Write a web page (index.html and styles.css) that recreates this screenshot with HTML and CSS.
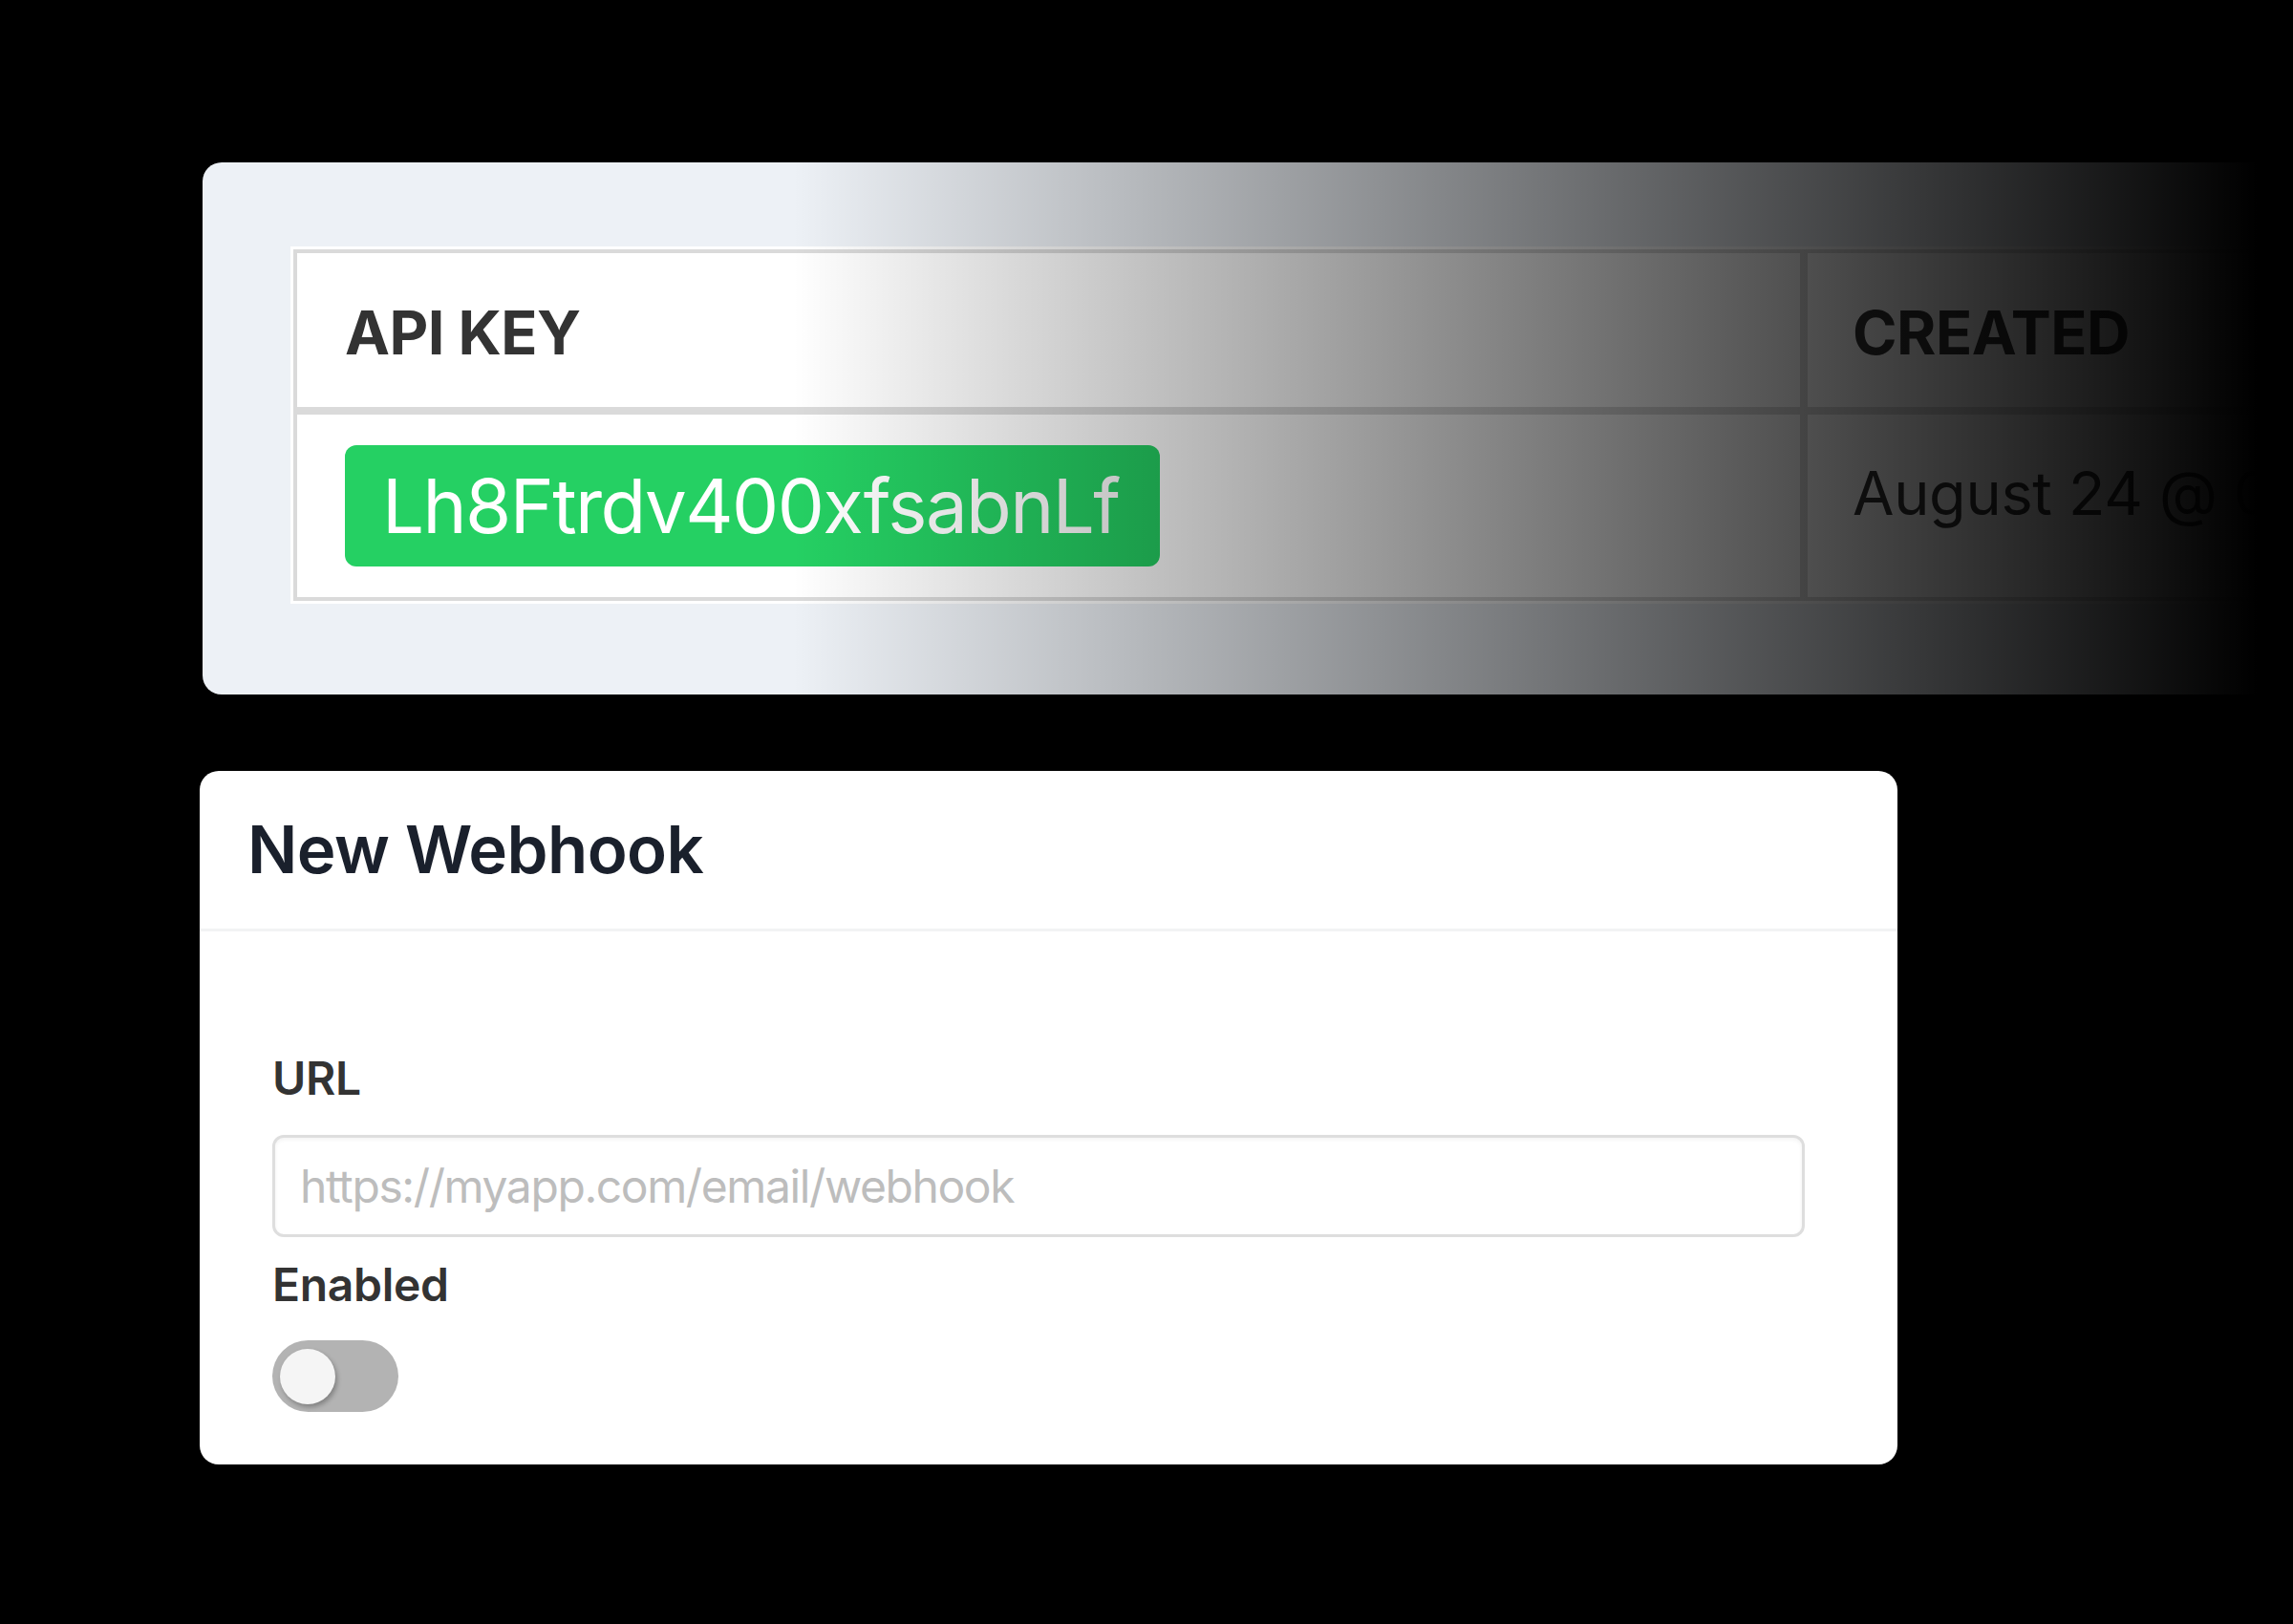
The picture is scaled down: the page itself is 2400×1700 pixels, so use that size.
FILE: index.html
```html
<!DOCTYPE html>
<html lang="en">
<head>
<meta charset="utf-8">
<title>API Keys &amp; Webhooks</title>
<link rel="stylesheet" href="styles.css">
</head>
<body>
<main class="page">
  <section class="key-card">
    <div class="table-wrap">
      <table class="key-table">
        <thead>
          <tr>
            <th class="col-key">API KEY</th>
            <th class="col-created">CREATED</th>
          </tr>
        </thead>
        <tbody>
          <tr>
            <td class="col-key"><span class="key-badge">Lh8Ftrdv400xfsabnLf</span></td>
            <td class="col-created date-cell">August 24 @ 04:31</td>
          </tr>
        </tbody>
      </table>
    </div>
  </section>

  <section class="webhook-card">
    <header class="webhook-head">
      <h2 class="webhook-title">New Webhook</h2>
    </header>
    <div class="webhook-body">
      <label class="field-label" for="url">URL</label>
      <input class="field-input" id="url" type="text" placeholder="https://myapp.com/email/webhook">
      <div class="field-label enabled-label">Enabled</div>
      <div class="switch"><span class="knob"></span></div>
    </div>
  </section>
</main>
</body>
</html>
```

FILE: styles.css
```css
html, body {
  margin: 0;
  padding: 0;
  background: #000;
  overflow: hidden;
  width: 2400px;
  height: 1700px;
}

body {
  font-family: Inter, "Noto Sans", "Liberation Sans", sans-serif;
}

.page {
  padding: 170px 0 0 209px;
  display: flex;
  flex-direction: column;
  align-items: flex-start;
}

/* ---------- API key card ---------- */
.key-card {
  position: relative;
  margin-left: 3px;
  width: 2400px;
  box-sizing: border-box;
  background: #edf1f6;
  border-radius: 20px 0 0 20px;
  padding: 88px 0 91px 92px;
  overflow: hidden;
}

.key-card::after {
  content: "";
  position: absolute;
  inset: 0;
  background: linear-gradient(to right, rgba(0,0,0,0) 618px, rgba(0,0,0,1) 2150px);
  pointer-events: none;
}

.table-wrap {
  background: #fff;
  padding: 3px;
  display: inline-block;
}

.key-table {
  border-collapse: separate;
  border-spacing: 0;
  table-layout: fixed;
  width: 2280px;
  color: #333;
}

.key-table th,
.key-table td {
  border: 4px solid #dadada;
  padding: 36px 50px 30px;
  text-align: left;
  vertical-align: top;
  font-size: 63px;
  line-height: 1.5;
  white-space: nowrap;
  overflow: hidden;
}

.key-table th {
  font-weight: 700;
  letter-spacing: -0.5px;
}

.key-table td {
  font-weight: 400;
  padding-top: 32px;
  padding-bottom: 32px;
}

.key-table .date-cell {
  padding-top: 35px;
  padding-bottom: 29px;
  letter-spacing: -0.3px;
}

.key-table .col-key {
  width: 1473px;
}

.key-table .col-created {
  padding-left: 47px;
}

.key-badge {
  display: block;
  width: fit-content;
  height: 127px;
  box-sizing: border-box;
  padding: 0 42px 0 39px;
  background: #25d063;
  color: #fff;
  border-radius: 12px;
  font-size: 78px;
  line-height: 127px;
  font-weight: 400;
  letter-spacing: -1.6px;
}

/* ---------- Webhook card ---------- */
.webhook-card {
  margin-top: 80px;
  width: 1777px;
  background: #fff;
  border-radius: 20px;
  overflow: hidden;
}

.webhook-head {
  height: 168px;
  box-sizing: border-box;
  display: flex;
  align-items: center;
  padding: 0 50px;
  border-bottom: 3px solid #f2f3f4;
}

.webhook-title {
  margin: 0;
  font-size: 69px;
  line-height: 1.2;
  font-weight: 600;
  letter-spacing: -0.6px;
  color: #1a202c;
}

.webhook-body {
  padding: 118px 97px 55px 76px;
  display: flex;
  flex-direction: column;
  align-items: flex-start;
}

.field-label {
  display: block;
  font-size: 48px;
  line-height: 72px;
  font-weight: 600;
  letter-spacing: -0.3px;
  color: #333;
}

.field-input {
  margin-top: 23px;
  width: 100%;
  height: 107px;
  box-sizing: border-box;
  border: 3px solid #dedede;
  border-radius: 12px;
  box-shadow: inset 0 2px 4px rgba(0,0,0,0.05);
  padding: 0 26px;
  font-family: Inter, "Noto Sans", "Liberation Sans", sans-serif;
  font-size: 48px;
  letter-spacing: -1.4px;
  color: #333;
  background: #fff;
  outline: none;
}

.field-input::placeholder {
  color: #bdbdbd;
}

.enabled-label {
  margin-top: 14px;
}

.switch {
  margin-top: 22px;
  width: 132px;
  height: 75px;
  border-radius: 38px;
  background: #b3b3b3;
  box-sizing: border-box;
  padding: 9px 0 0 8px;
}

.knob {
  display: block;
  width: 58px;
  height: 58px;
  border-radius: 50%;
  background: #f5f5f5;
  box-shadow: 2px 3px 5px rgba(0,0,0,0.28);
}
```
